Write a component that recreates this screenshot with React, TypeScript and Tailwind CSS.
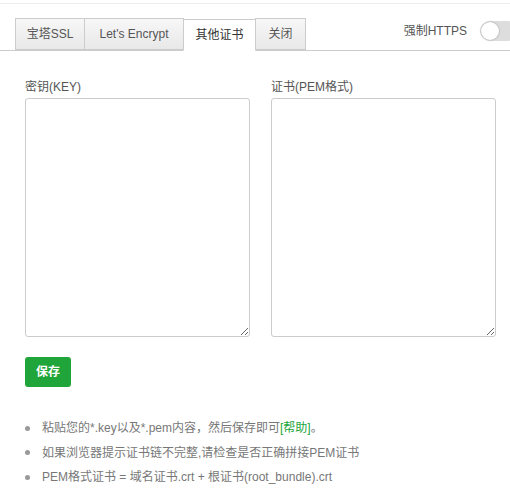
export default function App() {
  const tabs = ["宝塔SSL", "Let's Encrypt", "其他证书", "关闭"];
  const active = 2;
  const tabWidths = ["w-[70px]", "w-[100px]", "w-[73px]", "w-[51px]"];
  const tips = [
    <>
      粘贴您的*.key以及*.pem内容，然后保存即可
      <a className="text-[#20a53a]">[帮助]</a>。
    </>,
    <>如果浏览器提示证书链不完整,请检查是否正确拼接PEM证书</>,
    <>PEM格式证书 = 域名证书.crt + 根证书(root_bundle).crt</>,
  ];
  return (
    <div
      className="w-[510px] h-[502px] bg-white text-[12px] text-[#555] overflow-hidden"
      style={{ fontFamily: '"Liberation Sans", "Noto Sans CJK SC", sans-serif' }}
    >
      <div className="h-[4px] border-b border-[#eee]" />
      <div className="mt-[15px] pl-[15px] flex items-end border-b border-[#ccc] relative h-[32px]">
        {tabs.map((t, i) => (
          <div
            key={t}
            className={`${tabWidths[i]} h-[32px] flex items-center justify-center border border-[#ccc] -ml-px first:ml-0 text-[12px] ${
              i === active
                ? "bg-white border-b-white text-[#333] relative top-px"
                : "bg-gradient-to-b from-[#f7f7f7] to-[#e8e8e8] text-[#555]"
            }`}
          >
            {t}
          </div>
        ))}
        <div className="absolute right-0 top-[2px] flex items-center gap-[13px]">
          <span className="text-[12px] text-[#555]">强制HTTPS</span>
          <div className="w-[30px] h-[20px] rounded-l-full bg-[#ddd] border border-[#ddd] flex items-center">
            <div className="w-[18px] h-[18px] rounded-full bg-white shadow-[0_0_2px_rgba(0,0,0,0.35)]" />
          </div>
        </div>
      </div>
      <div className="px-[25px] pt-[26px] flex gap-[21px]">
        <div className="flex flex-col w-[225px]">
          <label className="h-[20px] leading-[20px] mb-[1px]">密钥(KEY)</label>
          <textarea className="w-[225px] h-[239px] border border-[#ccc] rounded-[3px] outline-none" />
        </div>
        <div className="flex flex-col w-[225px]">
          <label className="h-[20px] leading-[20px] mb-[1px]">证书(PEM格式)</label>
          <textarea className="w-[225px] h-[239px] border border-[#ccc] rounded-[3px] outline-none" />
        </div>
      </div>
      <div className="px-[25px] mt-[20px]">
        <button className="w-[46px] h-[30px] rounded-[3px] bg-[#20a53a] text-white text-[12px] font-bold">
          保存
        </button>
      </div>
      <ul className="mt-[29px] text-[#777] text-[12px] leading-[24.5px]">
        {tips.map((t, i) => (
          <li key={i} className="flex items-center">
            <span className="ml-[25px] w-[5px] h-[5px] rounded-full bg-[#999] mr-[12px]" />
            <span>{t}</span>
          </li>
        ))}
      </ul>
    </div>
  );
}
